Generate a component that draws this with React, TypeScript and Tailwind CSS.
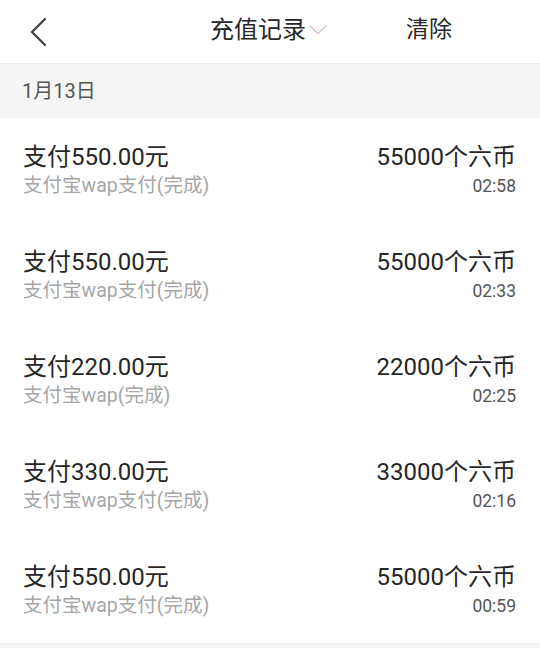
const records = [
  { amount: '550.00', method: '支付宝wap支付(完成)', coins: '55000', time: '02:58' },
  { amount: '550.00', method: '支付宝wap支付(完成)', coins: '55000', time: '02:33' },
  { amount: '220.00', method: '支付宝wap(完成)', coins: '22000', time: '02:25' },
  { amount: '330.00', method: '支付宝wap支付(完成)', coins: '33000', time: '02:16' },
  { amount: '550.00', method: '支付宝wap支付(完成)', coins: '55000', time: '00:59' },
]

const font = "font-['Roboto','Noto_Sans_CJK_SC',sans-serif]"

function RecordRow({ amount, method, coins, time }: (typeof records)[number]) {
  return (
    <div className="flex h-[105px] items-start justify-between bg-white pl-[23px] pr-[24px] pt-[24px]">
      <div className="flex flex-col">
        <span className="text-[24px] leading-[30px] text-[#262626]">支付{amount}元</span>
        <span className="mt-[2px] text-[19.5px] leading-[24px] text-[#a6a6a6]">{method}</span>
      </div>
      <div className="flex flex-col items-end">
        <span className="text-[24px] leading-[30px] text-[#262626]">{coins}个六币</span>
        <span className="mt-[2px] text-[17.5px] leading-[24px] text-[#555]">{time}</span>
      </div>
    </div>
  )
}

export default function App() {
  return (
    <div className={`${font} h-[648px] w-[540px] overflow-hidden bg-[#f5f5f5]`}>
      <header className="flex h-[64px] items-center border-b border-[#e8e8e8] bg-white">
        <div className="w-[210px] pl-[28px]">
          <svg width="20" height="30" viewBox="0 0 20 30" fill="none">
            <path d="M17 2 L4 15 L17 28" stroke="#444" strokeWidth="2.4" strokeLinecap="round" strokeLinejoin="round" />
          </svg>
        </div>
        <div className="mb-[3px] flex items-center">
          <span className="text-[24px] leading-[30px] text-[#262626]">充值记录</span>
          <svg className="ml-[3px]" width="18" height="10" viewBox="0 0 18 10" fill="none">
            <path d="M1 1 L9 8.5 L17 1" stroke="#c8c8c8" strokeWidth="1.4" strokeLinecap="round" strokeLinejoin="round" />
          </svg>
        </div>
        <span className="mb-[3px] ml-[79px] text-[23px] leading-[30px] text-[#262626]">清除</span>
      </header>
      <div className="flex h-[54px] items-center pl-[22px] text-[20px] text-[#555]">1月13日</div>
      {records.map((r, i) => (
        <RecordRow key={i} {...r} />
      ))}
    </div>
  )
}
